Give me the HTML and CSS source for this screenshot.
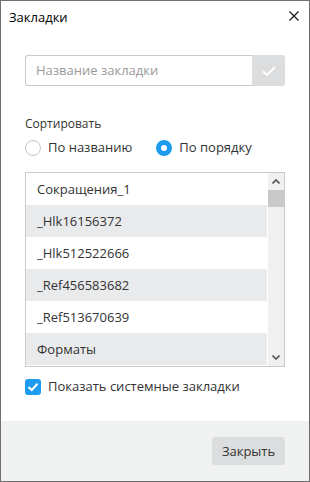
FILE: index.html
```html
<!DOCTYPE html>
<html lang="ru">
<head>
<meta charset="utf-8">
<title>Закладки</title>
<link rel="stylesheet" href="styles.css">
</head>
<body>
<div class="window">
  <div class="titlebar">
    <span class="title">Закладки</span>
    <svg class="close" width="10" height="10" viewBox="0 0 10 10"><path d="M0.5 0.5L9.5 9.5M9.5 0.5L0.5 9.5" stroke="#111" stroke-width="1.1" fill="none"/></svg>
  </div>
  <div class="content">
    <div class="name-row">
      <div class="name-input">Название закладки</div>
      <div class="name-ok"><svg width="14" height="10" viewBox="0 0 14 10"><path d="M1 5.2L5 9L13 1" stroke="#fff" stroke-width="2" fill="none"/></svg></div>
    </div>
    <div class="sort-label">Сортировать</div>
    <div class="radios">
      <label class="radio"><span class="dot"></span>По названию</label>
      <label class="radio on"><span class="dot"></span>По порядку</label>
    </div>
    <div class="list">
      <div class="rows">
        <div class="row">Сокращения_1</div>
        <div class="row alt">_Hlk16156372</div>
        <div class="row">_Hlk512522666</div>
        <div class="row alt">_Ref456583682</div>
        <div class="row">_Ref513670639</div>
        <div class="row alt">Форматы</div>
      </div>
      <div class="scrollbar">
        <div class="sb-btn"><svg width="8" height="5" viewBox="0 0 8 5"><path d="M0.5 4.5L4 1L7.5 4.5" stroke="#555" stroke-width="1.6" fill="none"/></svg></div>
        <div class="sb-thumb"></div>
        <div class="sb-space"></div>
        <div class="sb-btn"><svg width="8" height="5" viewBox="0 0 8 5"><path d="M0.5 0.5L4 4L7.5 0.5" stroke="#555" stroke-width="1.6" fill="none"/></svg></div>
      </div>
    </div>
    <label class="check"><span class="box"><svg width="12" height="10" viewBox="0 0 12 10"><path d="M1.5 5L4.8 8L10.5 1.8" stroke="#fff" stroke-width="2" fill="none"/></svg></span>Показать системные закладки</label>
  </div>
  <div class="footer">
    <div class="btn">Закрыть</div>
  </div>
</div>
</body>
</html>
```
FILE: styles.css
```css
* { box-sizing: border-box; }
html, body { margin: 0; padding: 0; background: #fff; }
body { font-family: "Open Sans", "Noto Sans", sans-serif; color: #333; }
.window {
  width: 310px; height: 482px;
  border: 1px solid #6f6f6f;
  display: flex; flex-direction: column;
  background: #fff;
}
.titlebar {
  height: 30px;
  display: flex; align-items: center; justify-content: space-between;
  padding: 0 10px 0 8px;
}
.title { font-size: 13px; color: #000; line-height: 16px; margin-top: 1px; }
.close { display: block; margin-top: -1px; }
.content { padding: 24px 24px 0; display: flex; flex-direction: column; }
.name-row { display: flex; height: 31px; }
.name-input {
  flex: 1;
  border: 1px solid #cacaca; border-right: none;
  border-radius: 3px 0 0 3px;
  font-size: 13px; color: #9a9a9a;
  padding-left: 10px; line-height: 29px;
}
.name-ok {
  width: 33px; background: #dcdddf; border-radius: 0 3px 3px 0;
  display: flex; align-items: center; justify-content: center;
}
.name-ok svg { display: block; }
.sort-label { font-size: 12px; line-height: 16px; margin-top: 30px; color: #333; }
.radios { display: flex; margin-top: 6px; height: 19px; align-items: center; }
.radio { display: flex; align-items: center; font-size: 13px; line-height: 19px; color: #333; }
.radio + .radio { margin-left: 24px; }
.dot {
  width: 16px; height: 16px; border-radius: 50%;
  border: 1px solid #c6c6c6; margin-right: 7px; background: #fff;
}
.radio.on .dot { border: 5px solid #1d9bf0; }
.list {
  margin-top: 15px;
  height: 195px;
  border: 1px solid #cacaca;
  display: flex;
}
.rows { flex: 1; display: flex; flex-direction: column; overflow: hidden; }
.row {
  height: 32px; flex: none;
  font-size: 13px; line-height: 32px; padding-left: 11px; color: #333;
}
.row.alt { background: #e9eaec; }
.scrollbar {
  width: 16px; margin-left: 1px; background: #f0f0f0;
  display: flex; flex-direction: column;
}
.sb-btn { height: 17px; display: flex; align-items: center; justify-content: center; }
.sb-btn svg { display: block; }
.sb-thumb { height: 17px; background: #c9c9c9; }
.sb-space { flex: 1; }
.check {
  display: flex; align-items: center; margin-top: 10px;
  font-size: 13px; line-height: 19px; color: #333;
}
.box {
  width: 16px; height: 16px; border-radius: 3px; background: #1d9bf0;
  margin-right: 7px;
  display: flex; align-items: center; justify-content: center;
}
.box svg { display: block; }
.footer {
  margin-top: auto; height: 60px; background: #f0f1f1;
  display: flex; justify-content: flex-end; align-items: flex-start;
  padding: 16px 24px 0;
}
.btn {
  width: 73px; height: 28px; background: #dcdddf; border-radius: 3px;
  font-size: 13px; line-height: 28px; text-align: center; color: #333;
}
```
